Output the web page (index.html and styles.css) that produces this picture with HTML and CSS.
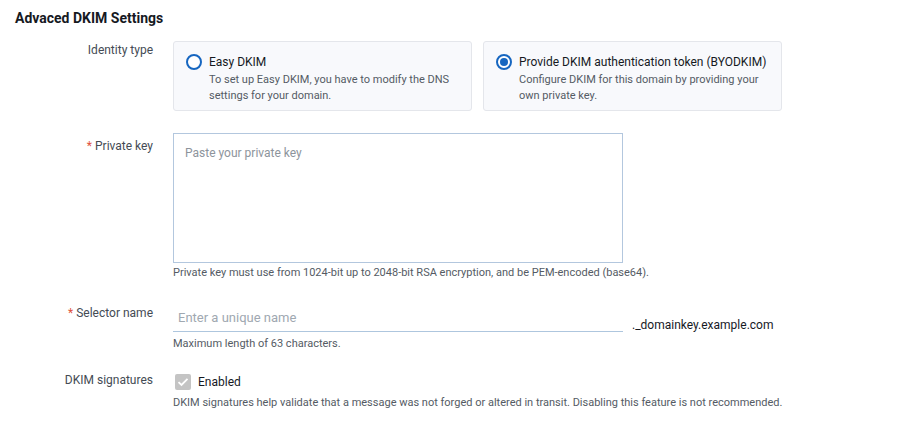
FILE: index.html
```html
<!DOCTYPE html>
<html lang="en">
<head>
<meta charset="utf-8">
<title>Advaced DKIM Settings</title>
<link rel="stylesheet" href="styles.css">
</head>
<body>
<div class="page">
  <h2 class="title">Advaced DKIM Settings</h2>
  <div class="form">
    <div class="label label-identity">Identity type</div>
    <div class="field">
      <div class="cards">
        <div class="card">
          <span class="radio"></span>
          <div class="card-text">
            <div class="card-title">Easy DKIM</div>
            <div class="card-desc">To set up Easy DKIM, you have to modify the DNS settings for your domain.</div>
          </div>
        </div>
        <div class="card">
          <span class="radio radio-checked"></span>
          <div class="card-text">
            <div class="card-title">Provide DKIM authentication token (BYODKIM)</div>
            <div class="card-desc">Configure DKIM for this domain by providing your own private key.</div>
          </div>
        </div>
      </div>
    </div>

    <div class="label label-key"><span class="req">*</span> Private key</div>
    <div class="field">
      <textarea class="textarea" placeholder="Paste your private key"></textarea>
      <div class="help help-key">Private key must use from 1024-bit up to 2048-bit RSA encryption, and be PEM-encoded (base64).</div>
    </div>

    <div class="label label-selector"><span class="req">*</span> Selector name</div>
    <div class="field">
      <div class="selector-row">
        <input class="input" type="text" placeholder="Enter a unique name">
        <span class="suffix">._domainkey.example.com</span>
      </div>
      <div class="help help-selector">Maximum length of 63 characters.</div>
    </div>

    <div class="label label-sig">DKIM signatures</div>
    <div class="field field-sig">
      <div class="check-row">
        <span class="checkbox">
          <svg width="12" height="10" viewBox="0 0 12 10"><path d="M1.5 5.2 L4.5 8 L10.5 1.8" fill="none" stroke="#ffffff" stroke-width="1.8"/></svg>
        </span>
        <span class="check-label">Enabled</span>
      </div>
      <div class="help help-sig">DKIM signatures help validate that a message was not forged or altered in transit. Disabling this feature is not recommended.</div>
    </div>
  </div>
</div>
</body>
</html>
```

FILE: styles.css
```css
* { box-sizing: border-box; }
html, body { margin: 0; padding: 0; background: #ffffff; }
body {
  font-family: Roboto, "Liberation Sans", Arial, sans-serif;
  color: #16191f;
}
.page { padding: 8px 15px 0 15px; }
.title {
  margin: 0;
  font-size: 14px;
  line-height: 20px;
  font-weight: 700;
  color: #16191f;
}
.form {
  margin-top: 13px;
  display: grid;
  grid-template-columns: 138px 1fr;
  column-gap: 20px;
  row-gap: 22px;
}
.label {
  text-align: right;
  font-size: 12px;
  line-height: 16px;
  color: #444b54;
}
.label-identity { padding-top: 1px; }
.label-key { padding-top: 5px; }
.label-selector { padding-top: 2px; }
.label-sig { margin-top: -2px; }
.field-sig { margin-top: -1px; }
.req { color: #e0523b; }
.cards { display: flex; gap: 11px; }
.card {
  width: 299px;
  height: 70px;
  background: #f8f9fc;
  border: 1px solid #e4e6eb;
  border-radius: 3px;
  padding: 12px 12px 0 12px;
  display: flex;
  gap: 7px;
  align-items: flex-start;
}
.radio {
  flex: none;
  width: 16px;
  height: 16px;
  border: 2px solid #1666c0;
  border-radius: 50%;
  background: #ffffff;
  display: flex;
  align-items: center;
  justify-content: center;
}
.radio-checked::after {
  content: "";
  width: 8px;
  height: 8px;
  border-radius: 50%;
  background: #1666c0;
}
.card-title {
  font-size: 12px;
  line-height: 16px;
  color: #16191f;
}
.card-desc {
  margin-top: 2px;
  font-size: 11px;
  line-height: 16px;
  color: #545b64;
}
.textarea {
  display: block;
  width: 450px;
  height: 130px;
  margin: 0;
  border: 1px solid #b3c7de;
  border-radius: 0;
  padding: 11px 11px;
  font-family: Roboto, "Liberation Sans", Arial, sans-serif;
  font-size: 12px;
  line-height: 16px;
  resize: none;
  outline: none;
}
.textarea::placeholder { color: #8d949c; }
.help {
  font-size: 11px;
  line-height: 16px;
  color: #545b64;
}
.help-key { margin-top: 2px; }
.help-selector { margin-top: 4px; }
.help-sig { margin-top: 4px; }
.selector-row { display: flex; align-items: flex-end; }
.input {
  width: 450px;
  height: 29px;
  margin: 0;
  border: none;
  border-bottom: 1px solid #aec6de;
  padding: 0 5px;
  font-family: Roboto, "Liberation Sans", Arial, sans-serif;
  font-size: 13px;
  outline: none;
  background: transparent;
}
.input::placeholder { color: #a0a8b1; }
.suffix {
  margin-left: 9px;
  font-size: 12px;
  line-height: 16px;
  color: #16191f;
  position: relative;
  top: 1px;
}
.check-row { display: flex; align-items: center; gap: 7px; height: 18px; }
.checkbox {
  width: 16px;
  height: 16px;
  margin-left: 2px;
  border-radius: 2px;
  background: #c4c4c4;
  display: flex;
  align-items: center;
  justify-content: center;
}
.check-label {
  font-size: 12px;
  line-height: 16px;
  color: #16191f;
}
```
